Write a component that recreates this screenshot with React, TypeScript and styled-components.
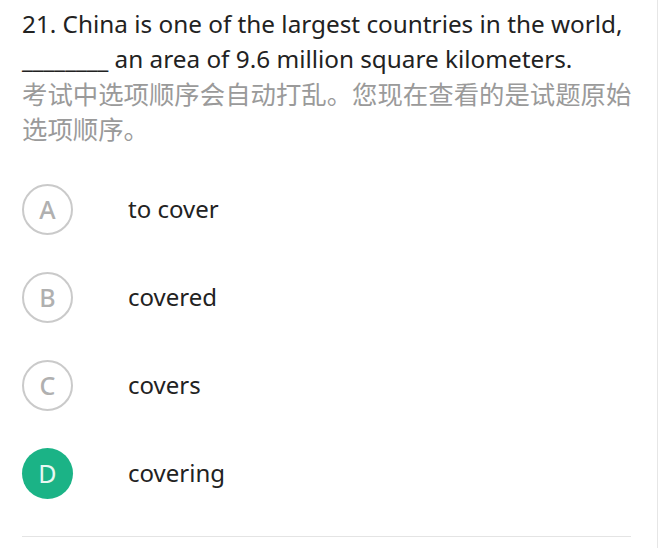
import React from "react";
import styled, { createGlobalStyle } from "styled-components";

const Global = createGlobalStyle`
  html, body { margin: 0; padding: 0; background: #fff; }
  body { font-family: "Noto Sans", "Noto Sans CJK SC", sans-serif; }
`;

const Page = styled.div`
  width: 658px;
  height: 548px;
  box-sizing: border-box;
  padding: 6px 26px 0 22px;
  border-right: 1px solid #e6e6e6;
  overflow: hidden;
`;

const Question = styled.div`
  font-size: 24.3px;
  line-height: 35px;
  color: #222;
  white-space: nowrap;
`;

const Hint = styled.div`
  font-family: "Noto Sans CJK SC", sans-serif;
  font-size: 25.4px;
  line-height: 35px;
  color: #9a9a9a;
  margin-right: -6px;
`;

const Options = styled.div`
  display: flex;
  flex-direction: column;
  gap: 37px;
  margin-top: 38px;
  padding-bottom: 37px;
  border-bottom: 1px solid #e4e4e4;
`;

const Row = styled.div`
  display: flex;
  align-items: center;
  height: 51px;
`;

const Badge = styled.div<{ $active?: boolean }>`
  width: 51px;
  height: 51px;
  box-sizing: border-box;
  border-radius: 50%;
  display: flex;
  align-items: center;
  justify-content: center;
  font-size: 25px;
  padding-bottom: 2px;
  font-weight: ${(p) => (p.$active ? 400 : 500)};
  color: ${(p) => (p.$active ? "#e9f8f2" : "#b0b0b0")};
  background: ${(p) => (p.$active ? "#1bb386" : "#fff")};
  border: ${(p) => (p.$active ? "none" : "2px solid #cacaca")};
  flex-shrink: 0;
`;

const Label = styled.div`
  margin-left: 55px;
  margin-top: -3px;
  font-size: 24px;
  color: #222;
`;

const options = [
  { key: "A", text: "to cover" },
  { key: "B", text: "covered" },
  { key: "C", text: "covers" },
  { key: "D", text: "covering", active: true },
];

export default function App() {
  return (
    <>
      <Global />
      <Page>
        <Question>
          21. China is one of the largest countries in the world,
          <br />
          ________ an area of 9.6 million square kilometers.
        </Question>
        <Hint>考试中选项顺序会自动打乱。您现在查看的是试题原始选项顺序。</Hint>
        <Options>
          {options.map((o) => (
            <Row key={o.key}>
              <Badge $active={o.active}>{o.key}</Badge>
              <Label>{o.text}</Label>
            </Row>
          ))}
        </Options>
      </Page>
    </>
  );
}
